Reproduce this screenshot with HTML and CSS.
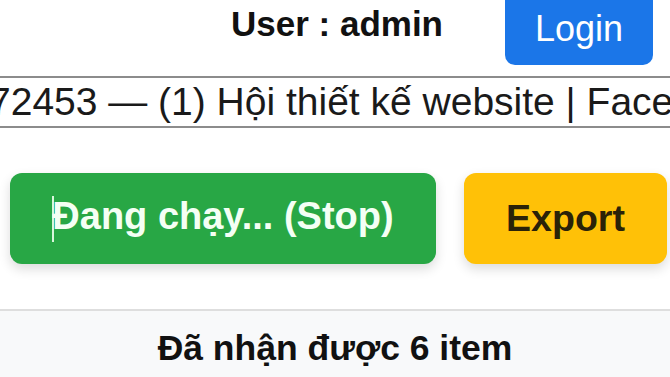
FILE: index.html
```html
<!DOCTYPE html>
<html lang="vi">
<head>
	<meta charset="UTF-8">
	<meta name="viewport" content="width=device-width, initial-scale=1.0">
	<title>Popup</title>
	<link rel="stylesheet" href="styles.css">
</head>
<body>
	<div class="top-bar">
		<span class="user-label">User : admin</span>
		<button class="btn btn-login">Login</button>
	</div>

	<div class="url-field">
		<div class="url-text">72453 — (1) Hội thiết kế website | Facebook</div>
	</div>

	<div class="actions">
		<button class="btn btn-run"><span class="caret"></span>Đang chạy... (Stop)</button>
		<button class="btn btn-export">Export</button>
	</div>

	<div class="status">
		Đã nhận được 6 item
	</div>
</body>
</html>
```

FILE: styles.css
```css
html, body {
	margin: 0;
	padding: 0;
	font-family: "Liberation Sans", Arial, sans-serif;
	background: #fff;
	overflow: hidden;
}

body {
	display: flex;
	flex-direction: column;
	height: 377px;
}

.top-bar {
	display: flex;
	justify-content: flex-end;
	align-items: center;
	gap: 62px;
	margin-top: -12px;
	padding-right: 17px;
}

.user-label {
	font-size: 35px;
	font-weight: bold;
	color: #111;
	padding-bottom: 6px;
}

.btn {
	font-family: inherit;
	border: none;
	cursor: pointer;
}

.btn-login {
	width: 148px;
	height: 77px;
	padding: 0;
	padding-top: 4px;
	border-radius: 10px;
	background-color: #1b76e8;
	color: #fff;
	font-size: 36px;
}

.url-field {
	margin: 11px -4px 0 -4px;
	height: 48px;
	border-top: 2px solid #8c8c8c;
	border-bottom: 2px solid #8c8c8c;
	overflow: hidden;
	display: flex;
	align-items: center;
}

.url-text {
	white-space: nowrap;
	font-size: 39px;
	color: #1a1a1a;
	text-indent: -7px;
}

.actions {
	display: flex;
	gap: 28px;
	margin-top: 45px;
	padding: 0 3px 0 10px;
}

.btn-run, .btn-export {
	height: 91px;
	border-radius: 12px;
	font-weight: bold;
	box-shadow: 0 5px 12px rgba(0, 0, 0, 0.14);
}

.btn-run {
	flex: 1;
	font-size: 38px;
	background-color: #28a745;
	color: #f4fff4;
}

.caret {
	display: inline-block;
	width: 2px;
	height: 46px;
	margin-right: -2px;
	vertical-align: middle;
	background-color: #d9f7dc;
}

.btn-export {
	width: 203px;
	font-size: 37.5px;
	background-color: #ffc107;
	color: #2a2208;
}

.status {
	flex: 1;
	margin-top: 45px;
	border-top: 2px solid #dedede;
	background-color: #f8f9fa;
	text-align: center;
	font-size: 35.5px;
	font-weight: bold;
	color: #111;
	padding-top: 17px;
}
```
